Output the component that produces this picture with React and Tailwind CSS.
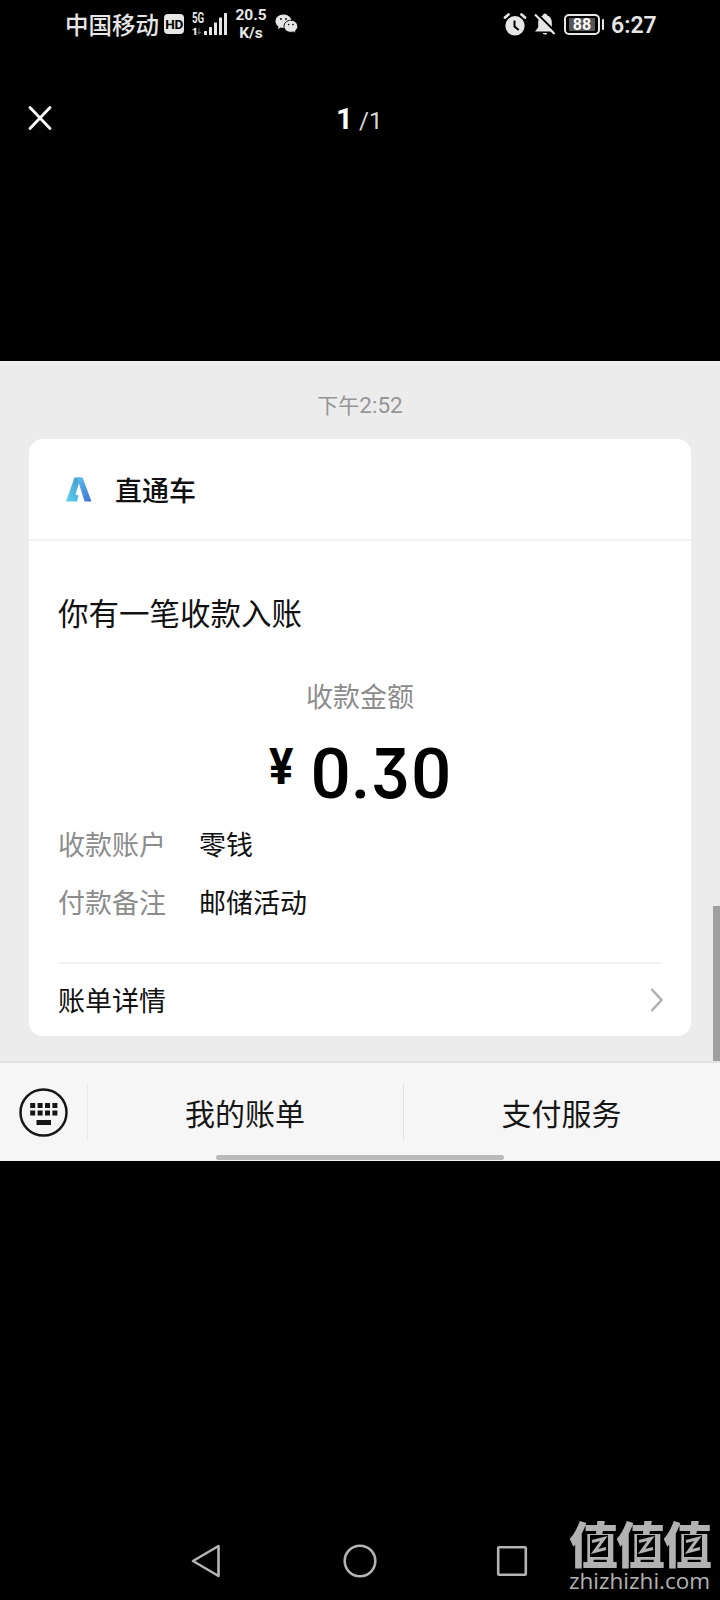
import React from 'react';

const detalles = [
  { label: '收款账户', value: '零钱' },
  { label: '付款备注', value: '邮储活动' },
];

function WechatIcon() {
  return (
    <svg className="w-[24px] h-[21px]" viewBox="0 0 24 21">
      <path d="M8.500 0.500C3.900 0.500 0.500 3.500 0.500 7.200c0 2.200 1.200 4 3 5.300l-.8 2.500 3-1.500c1 .3 1.900.4 2.800.4C13 13.900 16.500 11 16.500 7.200 16.500 3.500 13 .5 8.500.5z" fill="#e6e6e6" />
      <path d="M15.800 6.300C11.900 6.300 9 8.900 9 12.300s2.900 6 6.800 6c.9 0 1.700-.1 2.500-.4l2.600 1.500-.7-2.300c1.500-1.100 2.500-2.800 2.500-4.800 0-3.400-3-6-6.900-6z" fill="#e6e6e6" stroke="#000" strokeWidth="0.9" />
      <circle cx="5.900" cy="5" r="0.9" />
      <circle cx="11" cy="5" r="0.9" />
      <circle cx="13.600" cy="10.600" r=".8" />
      <circle cx="18" cy="10.600" r=".8" />
    </svg>
  );
}

function SignalIcon() {
  return (
    <svg className="w-[36px] h-[24px]" viewBox="0 0 36 24" fill="#e6e6e6">
      <path d="M.5 16.500l2.500-1.800h1.300V22H2.300v-5.300L.5 17.500z" />
      <path d="M7 15v6M5.500 19l1.500 2 2-2" fill="none" stroke="#555" strokeWidth="1.200" />
      <rect x="12" y="18" width="3" height="4" rx=".5" />
      <rect x="17" y="14" width="3" height="8" rx=".5" />
      <rect x="22" y="9.500" width="3" height="12.500" rx=".5" />
      <rect x="27" y="4.500" width="3" height="17.500" rx=".5" />
      <rect x="32" y="0" width="3" height="22" rx=".5" />
    </svg>
  );
}

function AlarmIcon() {
  return (
    <svg className="w-[24px] h-[23px]" viewBox="0 0 24 23">
      <circle cx="12" cy="12.800" r="9.700" fill="#e6e6e6" />
      <path d="M2 4.500L5.500 1.500M22 4.500L18.500 1.500" stroke="#e6e6e6" strokeWidth="2.800" strokeLinecap="round" />
      <path d="M11.500 7.500v6l4.200 3.500" fill="none" stroke="#000" strokeWidth="2" />
    </svg>
  );
}

function BellOffIcon() {
  return (
    <svg className="w-[22px] h-[22px]" viewBox="0 0 22 22">
      <path d="M11 .5c-1.200 0-1.900.8-1.900 1.800C6 3.200 4.200 5.700 4.200 9v5.500L1 18.500h20l-3.200-4V9c0-3.300-1.800-5.800-4.900-6.700 0-1-.7-1.800-1.900-1.800z" fill="#e6e6e6" />
      <path d="M8.800 20h4.400c-.5 2-3.900 2-4.400 0z" fill="#e6e6e6" />
      <path d="M2.500 0L22 19.500" stroke="#000" strokeWidth="2" />
      <path d="M1 1.500L20.500 21" stroke="#e6e6e6" strokeWidth="2.200" />
    </svg>
  );
}

function StatusBar() {
  return (
    <div className="flex items-start h-[50px] pl-[65px] text-[#e6e6e6]">
      <span className="mt-[7px] w-[99px] text-[23.5px] leading-[34px] font-medium whitespace-nowrap">中国移动</span>
      <span className="mt-[14px] w-[20px] h-[20px] rounded-[4px] bg-[#e6e6e6] text-black text-[13.5px] leading-[21px] font-bold text-center font-[Roboto] tracking-[-0.5px]">HD</span>
      <div className="relative ml-[8px] mt-[13px] w-[36px]">
        <SignalIcon />
        <span className="absolute left-0 top-[-2px] text-[14px] leading-[14px] font-bold font-[Roboto] origin-left scale-x-[0.7]">5G</span>
      </div>
      <div className="ml-[2px] mt-[6px] w-[42px] text-center text-[15.5px] leading-[18px] font-bold font-[Roboto]">
        <p>20.5</p>
        <p>K/s</p>
      </div>
      <div className="ml-[3px] mt-[14px]">
        <WechatIcon />
      </div>
      <div className="ml-[204px] mt-[13px]">
        <AlarmIcon />
      </div>
      <div className="ml-[7px] mt-[13px]">
        <BellOffIcon />
      </div>
      <div className="ml-[8px] mt-[14px] flex items-center">
        <span className="w-[36px] h-[21px] rounded-[5px] border-2 border-[#e6e6e6] p-[2px]">
          <span className="block mx-auto h-[13px] w-[26px] bg-[#555] rounded-[1px] text-white text-[16px] leading-[14px] text-center font-bold font-[Roboto]">88</span>
        </span>
        <span className="ml-[2px] w-[2px] h-[11px] bg-[#e6e6e6] rounded-sm"></span>
      </div>
      <span className="ml-[7px] mt-[10px] text-[23px] leading-[31px] font-semibold font-[Roboto]">6:27</span>
    </div>
  );
}

function ViewerHeader() {
  return (
    <div className="flex h-[311px] pl-[28px] pt-[55px] text-white">
      <svg className="w-[24px] h-[26px]" viewBox="0 0 24 26">
        <path d="M2 2.500L22 23.500M22 2.500L2 23.500" stroke="#fff" strokeWidth="2.800" strokeLinecap="round" />
      </svg>
      <div className="ml-[284px] mt-[-3px] flex items-baseline h-[34px] font-[Roboto]">
        <span className="w-[23px] text-[29.5px] leading-[34px] font-bold">1</span>
        <span className="text-[24px] leading-[34px] text-[#d8d8d8]">/1</span>
      </div>
    </div>
  );
}

function Logo() {
  return (
    <svg className="mt-[1px] w-[26px] h-[25px]" viewBox="0 0 26 25">
      <defs>
        <linearGradient id="izq" x1="0" y1="1" x2="1" y2="0">
          <stop offset="0" stopColor="#5fd0ee" />
          <stop offset="1" stopColor="#3f9ccb" />
        </linearGradient>
        <linearGradient id="der" x1="0" y1="0" x2="1" y2="1">
          <stop offset="0" stopColor="#5cc0ee" />
          <stop offset="1" stopColor="#3f6fd2" />
        </linearGradient>
      </defs>
      <path d="M8.500 0.500h6L9.500 17.500 12.500 18.500 11 24.500H0z" fill="url(#izq)" />
      <path d="M11 .5h5.500L25.500 24.500H18.500z" fill="url(#der)" />
    </svg>
  );
}

function PaymentCard() {
  return (
    <div className="mx-[29px] h-[597px] rounded-[14px] bg-white text-[#111] text-[27px]">
      <div className="flex items-center h-[102px] pl-[37px] border-b-2 border-[#f4f4f4]">
        <Logo />
        <span className="ml-[23px] mt-[2px] font-medium leading-[40px]">直通车</span>
      </div>

      <div className="h-[421px] px-[29px] pt-[49px]">
        <p className="text-[30.5px] leading-[44px]">你有一笔收款入账</p>
        <p className="mt-[42px] text-center leading-[40px] text-[#8c8c8c]">收款金额</p>
        <div className="mt-[20px] h-[74px] flex justify-center text-black font-[Roboto]">
          <span className="w-[42px] pt-[4px] text-[50px] leading-[54px] font-bold">
            <span className="block origin-left scale-x-[0.91]">¥</span>
          </span>
          <span className="text-[71px] leading-[74px] font-medium whitespace-nowrap">
            0.<span className="inline-block w-[40.5px] font-[Inter] font-semibold text-[69px] leading-[74px] [font-feature-settings:'cv09'] origin-left scale-x-[0.87]">3</span>0
          </span>
        </div>

        <div className="mt-[5px]">
          {detalles.map(d => (
            <div key={d.label} className="flex h-[58px] items-center">
              <span className="w-[141px] text-[#8c8c8c]">{d.label}</span>
              <span>{d.value}</span>
            </div>
          ))}
        </div>
      </div>

      <div className="mx-[29px] flex h-[74px] items-center justify-between border-t-2 border-[#f3f3f3]">
        <span>账单详情</span>
        <svg className="mr-[-1px] w-[13px] h-[24px]" viewBox="0 0 13 24">
          <path d="M1.500 1L11.500 12L1.500 23" fill="none" stroke="#b0b0b0" strokeWidth="2.600" />
        </svg>
      </div>
    </div>
  );
}

function MenuBar() {
  return (
    <div className="relative flex items-center h-[100px] border-t-2 border-[#e2e2e2] bg-[#f6f6f6] text-[#161616] text-[30px]">
      <div className="w-[87px] pl-[19px]">
        <svg className="w-[49px] h-[49px]" viewBox="0 0 49 49" fill="#161616">
          <circle cx="24.500" cy="24.500" r="23" fill="none" stroke="#161616" strokeWidth="2.500" />
          {[0, 1, 2, 3].map(i => (
            <g key={i}>
              <rect x={11.2 + i * 7.4} y="15" width="5" height="5" />
              <rect x={11.2 + i * 7.4} y="22.500" width="5" height="5" />
            </g>
          ))}
          <rect x="17.500" y="32" width="14.500" height="5" />
        </svg>
      </div>
      <span className="w-[316px] pr-[1px] h-[57px] leading-[57px] text-center border-l border-[#e8e8e8]">我的账单</span>
      <span className="w-[317px] pr-[1px] h-[57px] leading-[57px] text-center border-l border-[#e2e2e2]">支付服务</span>
      {/* indicador de inicio */}
      <span className="absolute left-[216px] bottom-[1px] w-[288px] h-[5px] rounded-full bg-[#bababa]"></span>
    </div>
  );
}

function NavBar() {
  return (
    <div className="relative flex pt-[382px] pl-[190px] h-[439px]">
      <svg className="w-[32px] h-[36px]" viewBox="0 0 32 36">
        <path d="M28.500 3v30L3 18z" fill="none" stroke="#b4b4b4" strokeWidth="2.600" strokeLinejoin="round" />
      </svg>
      <svg className="ml-[121px] w-[34px] h-[36px]" viewBox="0 0 34 36">
        <circle cx="17" cy="18" r="15.300" fill="none" stroke="#b4b4b4" strokeWidth="2.600" />
      </svg>
      <svg className="ml-[119px] w-[32px] h-[36px]" viewBox="0 0 32 36">
        <rect x="2.200" y="4.200" width="27.600" height="27.600" rx="1" fill="none" stroke="#b4b4b4" strokeWidth="2.600" />
      </svg>

      {/* marca de agua */}
      <div className="absolute left-[569px] top-[355px] w-[146px] text-[#b2b2b2]">
        <div className="flex h-[50px]">
          {[0, 1, 2].map(i => (
            <span key={i} className="relative w-[47px] text-[49px] leading-[51px] font-black">
              值
              <svg className="absolute left-[21px] top-[19px] w-[18px] h-[22px] bg-black" viewBox="0 0 18 22">
                <path d="M2 6.500L14 3.500L4.500 16.500L16 13.500" fill="none" stroke="#b2b2b2" strokeWidth="3" />
              </svg>
            </span>
          ))}
        </div>
        <p className="mt-[1px] text-[22.500px] leading-[28px] whitespace-nowrap font-['Open_Sans'] font-medium">zhizhizhi.com</p>
      </div>
    </div>
  );
}

export default function App() {
  return (
    <div className="w-[720px] h-[1600px] overflow-hidden bg-black font-['Noto_Sans_CJK_SC',sans-serif]">
      <StatusBar />
      <ViewerHeader />
      <div className="relative h-[800px] bg-[#ececec]">
        <div className="h-[6px] border-b border-[#e7e7e7] bg-[#eeeeee]"></div>
        <p className="h-[72px] pt-[21px] text-center text-[21px] leading-[32px] text-[#959595]">
          下午<span className="font-[Roboto] text-[22.500px]">2:52</span>
        </p>
        <PaymentCard />
        <div className="h-[25px]"></div>
        <MenuBar />
        {/* barra de desplazamiento */}
        <span className="absolute right-0 top-[545px] w-[7px] h-[155px] bg-[#9f9f9f]"></span>
      </div>
      <NavBar />
    </div>
  );
}
